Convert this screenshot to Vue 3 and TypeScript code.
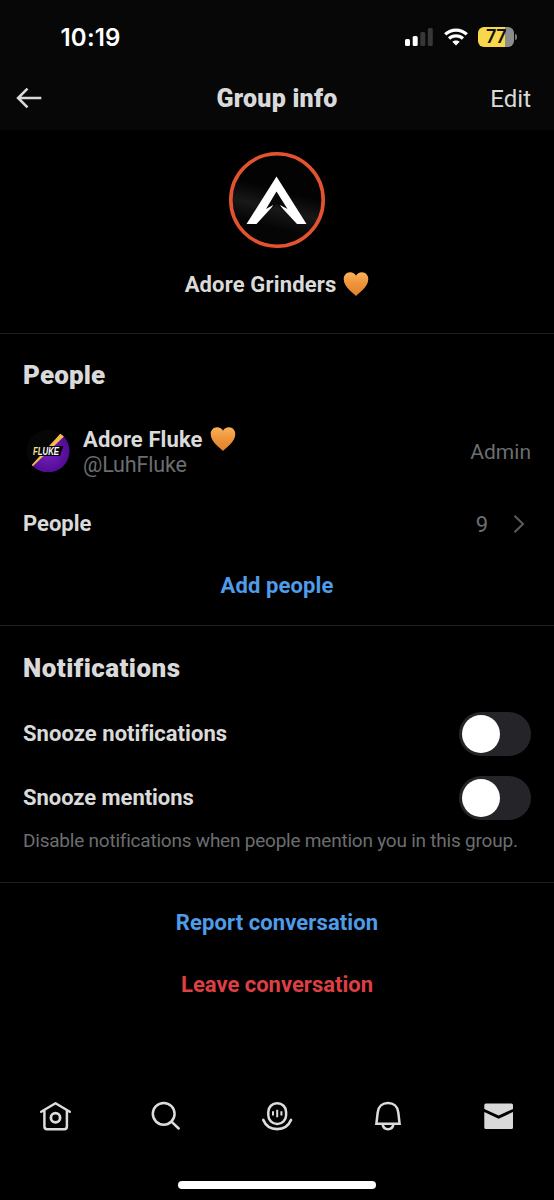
<script setup lang="ts">
import { ref } from 'vue'

interface Toggle { id: string; label: string; on: boolean }

const toggles = ref<Toggle[]>([
  { id: 'notifications', label: 'Snooze notifications', on: false },
  { id: 'mentions', label: 'Snooze mentions', on: false },
])
const peopleCount = 9
const battery = 77
</script>

<template>
  <div class="screen">
    <svg class="defs" width="0" height="0" aria-hidden="true">
      <defs>
        <linearGradient id="heartFill" x1="0" y1="0" x2="0" y2="1">
          <stop offset="0" stop-color="#f9b35a" />
          <stop offset="0.45" stop-color="#f0953c" />
          <stop offset="1" stop-color="#e0832c" />
        </linearGradient>
        <symbol id="heart" viewBox="0 0 26 26">
          <path d="M13 25C10.500 22 .7 16.500 .7 8C.7 4 3.500 1.200 7 1.200C9.800 1.200 12 2.600 13 4.800C14 2.600 16.200 1.200 19 1.200C22.500 1.200 25.300 4 25.300 8C25.300 16.500 15.500 22 13 25Z" fill="url(#heartFill)" />
        </symbol>
      </defs>
    </svg>

    <header class="top">
      <div class="status">
        <span class="time">10:19</span>
        <div class="indicators">
          <svg class="signal" width="28" height="18" viewBox="0 0 28 18">
            <rect x="0" y="11" width="5" height="7" rx="1.500" fill="#fff" />
            <rect x="7.700" y="8" width="5" height="10" rx="1.500" fill="#fff" />
            <rect x="15.300" y="4" width="5" height="14" rx="1.500" fill="#373737" />
            <rect x="22.800" y="0" width="5" height="18" rx="1.500" fill="#373737" />
          </svg>
          <svg class="wifi" width="24" height="18" viewBox="0 0 24 18">
            <path d="M1.200 6.400C7.200 .6 16.800 .6 22.800 6.400M5 10.500C8.900 6.900 15.100 6.900 19 10.500" fill="none" stroke="#fff" stroke-width="3.200" />
            <path d="M8.300 13.800C10.400 12 13.600 12 15.700 13.800L12 17.500Z" fill="#fff" />
          </svg>
          <div class="battery"><span class="cell">{{ battery }}</span><i class="cap" /></div>
        </div>
      </div>
      <nav class="nav">
        <svg class="back" width="26" height="22" viewBox="0 0 26 22" fill="none" stroke="#d9d9d9" stroke-width="2.600">
          <path d="M11.500 1.600L2.100 11L11.500 20.400M2.500 11H25.300" />
        </svg>
        <h1>Group info</h1>
        <span class="edit">Edit</span>
      </nav>
    </header>

    <section class="profile">
      <svg class="group-avatar" width="96" height="96" viewBox="0 0 96 96">
        <defs>
          <linearGradient id="sheen" x1="0.65" y1="0" x2="0.4" y2="1">
            <stop offset="0.400" stop-color="#040404" />
            <stop offset="0.600" stop-color="#1f1f1f" />
            <stop offset="0.800" stop-color="#060606" />
          </linearGradient>
          <pattern id="mesh" width="2" height="2" patternUnits="userSpaceOnUse" patternTransform="rotate(12)">
            <circle cx="1" cy="1" r=".6" fill="#000" />
          </pattern>
        </defs>
        <circle cx="48" cy="48" r="46.300" fill="url(#sheen)" />
        <circle cx="48" cy="48" r="45" fill="url(#mesh)" />
        <circle cx="48" cy="48" r="46.200" fill="none" stroke="#e3532f" stroke-width="3.600" />
        <path d="M47.500 24.500L77.500 72H68L47.600 50L27.500 72H17.500Z" fill="#fff" />
        <path d="M47.500 39.500L37 57L44.300 53L42 57.500L47.500 51.500L53.200 57.500L51 53L58.500 57Z" fill="#080808" />
      </svg>
      <div class="group-name"><span>Adore Grinders</span><svg class="heart"><use href="#heart" /></svg></div>
    </section>

    <section class="people">
      <h2 class="h-people">People</h2>
      <div class="member">
        <svg class="avatar" width="44" height="44" viewBox="0 0 44 44">
          <defs>
            <radialGradient id="violet" cx=".5" cy=".55" r=".55">
              <stop offset="0" stop-color="#7424bf" />
              <stop offset="1" stop-color="#4b078c" />
            </radialGradient>
            <linearGradient id="lettering" gradientUnits="userSpaceOnUse" x1="7" y1="0" x2="34" y2="0">
              <stop offset="0.200" stop-color="#f6ea78" />
              <stop offset="0.270" stop-color="#fff" />
            </linearGradient>
            <clipPath id="round"><circle cx="22" cy="22" r="21.500" /></clipPath>
          </defs>
          <g clip-path="url(#round)">
            <rect width="44" height="44" fill="#060607" />
            <path d="M44 0V44H0Z" fill="url(#violet)" transform="translate(0 -1)" />
            <path d="M34.500 4.500L38 7.500L6 38L4.800 37Z" fill="#f5be4b" />
            <path d="M6.500 17H37.500L34 27H4Z" fill="#09040f" />
          </g>
          <text x="7" y="25.500" class="logo" textLength="26" lengthAdjust="spacingAndGlyphs">FLUKE</text>
        </svg>
        <div class="identity">
          <div class="name"><span>Adore Fluke</span><svg class="heart"><use href="#heart" /></svg></div>
          <div class="handle">@LuhFluke</div>
        </div>
        <span class="role">Admin</span>
      </div>
      <div class="count-row">
        <span class="label l-people">People</span>
        <span class="count">{{ peopleCount }}</span>
        <svg class="chevron" width="12" height="18" viewBox="0 0 12 18" fill="none" stroke="#5b5d60" stroke-width="2">
          <path d="M1.500 .8L10 9L1.500 17.200" />
        </svg>
      </div>
      <div class="action add">Add people</div>
    </section>

    <section class="notifications">
      <h2 class="h-notif">Notifications</h2>
      <div v-for="t in toggles" :key="t.id" class="toggle-row" @click="t.on = !t.on">
        <span class="label" :class="'l-' + t.id">{{ t.label }}</span>
        <span class="switch" :class="{ on: t.on }"><i /></span>
      </div>
      <p class="hint">Disable notifications when people mention you in this group.</p>
    </section>

    <section class="links">
      <div class="action report">Report conversation</div>
      <div class="action leave">Leave conversation</div>
    </section>

    <footer class="tabs">
      <svg viewBox="0 0 36 36" fill="none" stroke="#dcdcdc" stroke-width="2.500" stroke-linecap="round" stroke-linejoin="round">
        <path d="M4.200 13.800L18.500 5.200L32.800 13.800M7.400 12.500V28.500Q7.400 31.200 10.100 31.200H27.200Q29.900 31.200 29.900 28.500V12.500" />
        <circle cx="18.500" cy="19.800" r="4.600" stroke-width="2.800" />
      </svg>
      <svg viewBox="0 0 36 36" fill="none" stroke="#dcdcdc" stroke-width="2.500" stroke-linecap="round">
        <circle cx="15.700" cy="15.800" r="10.900" />
        <path d="M23.700 23.800L30.700 30.500" />
      </svg>
      <svg viewBox="0 0 36 36" fill="none" stroke="#dcdcdc" stroke-width="2.500" stroke-linecap="round">
        <rect x="9.300" y="5.200" width="17.800" height="20.800" rx="8.700" />
        <path d="M4.300 22C9.500 34.200 26.700 34.200 32 22" stroke-width="2.700" />
        <path d="M14 13.300V17.500M18.200 11.800V19.300M22.400 13.300V17.500" stroke-width="2" stroke-linecap="butt" />
      </svg>
      <svg viewBox="0 0 36 36" fill="none" stroke="#dcdcdc" stroke-width="2.500">
        <path d="M6.400 25.700L7.700 14.500C8.300 8.600 12.500 5 18 5S27.700 8.600 28.300 14.500L29.600 25.700ZM12.500 26C13 29.200 15 31.200 18 31.200S23 29.200 23.500 26" />
      </svg>
      <svg viewBox="0 0 36 36" fill="#d9d9d9">
        <path d="M3.300 10.900V7Q3.300 5.400 4.900 5.400H30.400Q32 5.400 32 7V10.900L17.600 17.600Z" />
        <path d="M3.300 14L17.600 20.800L32 14V29.500Q32 31.100 30.400 31.100H4.900Q3.300 31.100 3.300 29.500Z" />
      </svg>
    </footer>
    <div class="home-indicator"><i /></div>
  </div>
</template>

<style>
html, body { margin: 0; background: #000; }
</style>

<style scoped>
* { box-sizing: border-box; }
.screen { width: 554px; height: 1200px; overflow: hidden; display: flex; flex-direction: column; background: #000; color: #dadada; font-family: Roboto, "Liberation Sans", sans-serif; font-variant-ligatures: none; white-space: nowrap; }
.defs { position: absolute; }
svg { display: block; flex: none; }
h1, h2, p { margin: 0; }
.top { height: 130px; flex: none; background: #070707; }
.status { height: 66px; padding: 8px 37px 0 60.500px; display: flex; align-items: center; justify-content: space-between; }
.time { margin-top: 2px; color: #fff; font: 600 24px/30px Inter, sans-serif; letter-spacing: .2px; }
.indicators { display: flex; align-items: center; }
.wifi { margin: 0 10px 0 11px; }
.battery { display: flex; align-items: center; gap: 1px; }
.cell { width: 36px; height: 20px; border-radius: 6px; background: linear-gradient(90deg, #f8d74a 76%, #8c8c8c 76%); color: #111; font: 600 18px/20px Inter, sans-serif; letter-spacing: -.5px; text-align: center; }
.cap { width: 2px; height: 6px; background: #777; border-radius: 0 2px 2px 0; }
.nav { height: 64px; padding: 0 23px 0 16px; display: grid; grid-template-columns: 1fr auto 1fr; align-items: center; }
.nav h1 { font-size: 25px; line-height: 30px; font-weight: 900; letter-spacing: .25px; margin: 2px 0 0 7px; }
.back { margin-left: 0; }
.edit { justify-self: end; margin-top: 2px; font-size: 24px; line-height: 30px; }
.profile { height: 204px; padding-top: 22px; flex: none; display: flex; flex-direction: column; align-items: center; border-bottom: 1px solid #1d1f21; }
.group-name { margin-top: 21px; height: 30px; display: flex; align-items: center; gap: 7px; font-size: 22px; font-weight: 700; letter-spacing: .15px; }
.heart { width: 26px; height: 26px; }
.people { height: 292px; flex: none; padding: 24px 23px 0; border-bottom: 1px solid #1d1f21; }
h2 { font-size: 26px; line-height: 34px; font-weight: 900; }
.h-people { letter-spacing: .15px; }
.h-notif { letter-spacing: .45px; }
.member { height: 56px; margin-top: 32px; display: flex; align-items: center; }
.avatar { margin: -2px 0 0 3px; }
.logo { font: italic 700 11px "Liberation Sans", sans-serif; fill: url(#lettering); }
.identity { margin-left: 13px; flex: 1; }
.name { display: flex; align-items: center; gap: 7px; height: 26px; font-size: 22px; font-weight: 700; letter-spacing: .1px; }
.handle { height: 26px; line-height: 26px; font-size: 21.500px; letter-spacing: -.15px; color: #6b6e71; }
.role { font-size: 21px; color: #6b6e71; }
.count-row { height: 40px; margin-top: 24px; display: flex; align-items: center; }
.label { flex: 1; font-size: 22px; font-weight: 700; line-height: 26px; margin-top: -1px; }
.l-notifications { letter-spacing: .05px; }
.l-mentions { letter-spacing: -.05px; }
.count { font-size: 22px; color: #6b6e71; margin-right: 25px; }
.chevron { margin-right: 6px; }
.action { font-size: 22px; line-height: 30px; font-weight: 700; letter-spacing: .1px; text-align: center; color: #4f9ce8; }
.add { margin-top: 27px; }
.notifications { height: 257px; flex: none; padding: 25px 23px 0; border-bottom: 1px solid #1d1f21; }
.toggle-row { height: 64px; display: flex; align-items: center; }
.h-notif + .toggle-row { margin-top: 17px; }
.switch { width: 72px; height: 44px; padding: 3px; border-radius: 22px; background: #252529; }
.switch i { display: block; width: 38px; height: 38px; border-radius: 50%; background: #fff; }
.switch.on { background: #1d9bf0; }
.switch.on i { margin-left: 28px; }
.hint { margin-top: -1px; font-size: 19px; line-height: 24px; letter-spacing: -.22px; color: #6b6e71; }
.links { height: 177px; flex: none; padding-top: 25px; }
.leave { margin-top: 32px; color: #dd3f42; letter-spacing: 0; }
.tabs { height: 113px; flex: none; padding-top: 38px; display: grid; grid-template-columns: repeat(5, 1fr); justify-items: center; }
.tabs svg { width: 36px; height: 36px; }
.home-indicator { display: flex; justify-content: center; }
.home-indicator i { width: 198px; height: 8px; margin-top: 8px; border-radius: 4px; background: #fff; }
</style>
